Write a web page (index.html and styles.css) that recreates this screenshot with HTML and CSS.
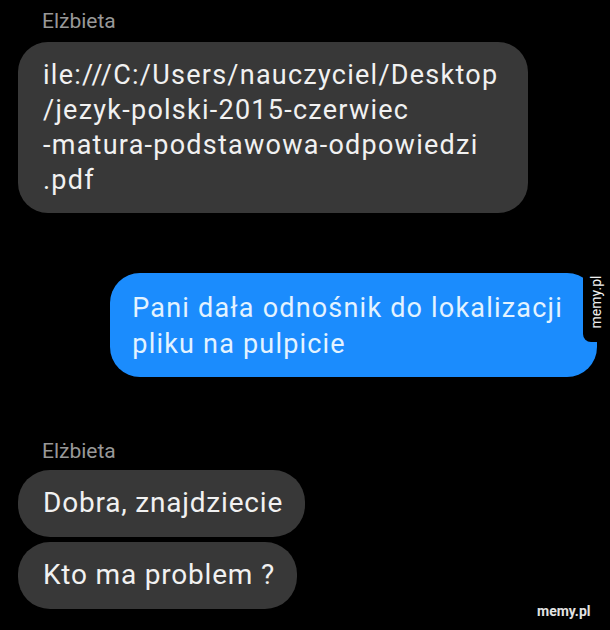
FILE: index.html
```html
<!DOCTYPE html>
<html lang="pl">
<head>
<meta charset="utf-8">
<title>Czat</title>
<link rel="stylesheet" href="styles.css">
</head>
<body>
<div class="chat">
  <div class="name name-first">Elżbieta</div>
  <div class="bubble in long">ile:///C:/Users/nauczyciel/Desktop<br>/jezyk-polski-2015-czerwiec<br>-matura-podstawowa-odpowiedzi<br>.pdf</div>
  <div class="bubble out">Pani dała odnośnik do lokalizacji<br>pliku na pulpicie</div>
  <div class="name name-second">Elżbieta</div>
  <div class="bubble in short">Dobra, znajdziecie</div>
  <div class="bubble in short next">Kto ma problem ?</div>
</div>
<div class="side-mark"><span>memy.pl</span></div>
<div class="foot-mark">memy.pl</div>
</body>
</html>
```
FILE: styles.css
```css
* { box-sizing: border-box; }
html, body {
  margin: 0;
  padding: 0;
  background: #000;
}
body {
  width: 610px;
  height: 630px;
  overflow: hidden;
  position: relative;
  font-family: Roboto, "Liberation Sans", sans-serif;
}
.chat {
  display: flex;
  flex-direction: column;
  align-items: flex-start;
}
.name {
  font-size: 21px;
  line-height: 24px;
  color: #989898;
  margin-left: 42px;
}
.name-first { margin-top: 9px; }
.name-second { margin-top: 62px; }
.bubble {
  white-space: nowrap;
  color: #f1f1f1;
}
.in {
  background: #383838;
  margin-left: 18px;
}
.long {
  margin-top: 9px;
  font-size: 27px;
  line-height: 35px;
  letter-spacing: 1.25px;
  padding: 16px 30px 15px 25px;
  border-radius: 30px;
}
.out {
  align-self: flex-end;
  margin-right: 13px;
  margin-top: 60px;
  background: #1b8cfd;
  color: #e4f3ff;
  font-size: 27px;
  line-height: 36px;
  letter-spacing: 1.2px;
  padding: 17px 34px 15px 22px;
  border-radius: 30px;
}
.short {
  margin-top: 7px;
  font-size: 28px;
  line-height: 36px;
  letter-spacing: 0.8px;
  padding: 15px 22px 16px 25px;
  border-radius: 32px;
}
.next { margin-top: 5px; }
.side-mark {
  position: absolute;
  top: 262px;
  right: 0;
  width: 27px;
  height: 80px;
  background: #000;
  border-bottom-left-radius: 8px;
  display: flex;
  align-items: center;
  justify-content: center;
}
.side-mark span {
  display: block;
  transform: rotate(-90deg);
  color: #f2f2f2;
  font-size: 14px;
  line-height: 14px;
  white-space: nowrap;
}
.foot-mark {
  position: absolute;
  left: 537px;
  top: 601px;
  color: #e2e2e2;
  font-size: 14px;
  font-weight: bold;
  line-height: 20px;
}
```
